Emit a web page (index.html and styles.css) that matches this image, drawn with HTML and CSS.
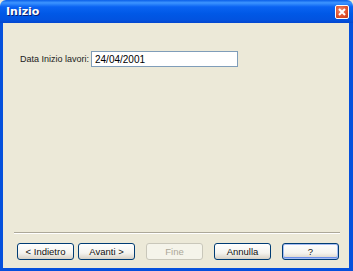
FILE: index.html
```html
<!DOCTYPE html>
<html lang="it">
<head>
    <meta charset="UTF-8">
    <title>Inizio</title>
    <link rel="stylesheet" href="styles.css">
</head>
<body>
    <div class="window">
        <div class="titlebar">
            <span class="title">Inizio</span>
            <button class="close-btn" aria-label="Chiudi">
                <svg width="8" height="8" viewBox="0 0 8 8"><path d="M1 1L7 7M7 1L1 7" stroke="#fff" stroke-width="2"/></svg>
            </button>
        </div>
        <div class="client">
            <div class="page">
                <div class="field-row">
                    <label for="data">Data Inizio lavori:</label>
                    <input type="text" id="data" class="text-input" value="24/04/2001">
                </div>
            </div>
            <div class="separator"></div>
            <div class="buttons">
                <button class="btn">&lt; Indietro</button>
                <button class="btn">Avanti &gt;</button>
                <button class="btn btn-gap" disabled>Fine</button>
                <button class="btn btn-gap">Annulla</button>
                <button class="btn btn-gap btn-default">?</button>
            </div>
        </div>
    </div>
</body>
</html>
```

FILE: styles.css
```css
html, body {
    margin: 0;
    padding: 0;
}
body {
    font-family: "Liberation Sans", Arial, sans-serif;
    font-size: 9.5px;
    color: #000;
    background: #ece9d8;
}
.window {
    width: 353px;
    height: 271px;
    display: flex;
    flex-direction: column;
    box-sizing: border-box;
}
.titlebar {
    height: 23px;
    flex: none;
    display: flex;
    align-items: center;
    justify-content: space-between;
    padding: 0 4px 0 6px;
    background: linear-gradient(#0a5fe8 0%, #3d95ff 12%, #0a63f2 30%, #0058e6 60%, #0253e0 85%, #0346cf 100%);
    border-radius: 6px 6px 0 0;
}
.title {
    color: #fff;
    font-family: "DejaVu Sans", Verdana, sans-serif;
    font-weight: bold;
    font-size: 11px;
    text-shadow: 1px 1px 0 #0a1e72;
}
.close-btn {
    width: 14px;
    height: 14px;
    padding: 0;
    border: 1px solid #fff;
    border-radius: 2px;
    background: radial-gradient(circle at 40% 35%, #f08a6a 0%, #e0532f 55%, #c23a16 100%);
    display: flex;
    align-items: center;
    justify-content: center;
}
.client {
    flex: 1;
    display: flex;
    flex-direction: column;
    border: 3px solid #0550dc;
    border-top: none;
    border-right-width: 4px;
    background: #ece9d8;
}
.page {
    flex: 1;
    padding: 28px 0 0 17px;
}
.field-row {
    display: flex;
    align-items: center;
    gap: 3px;
}
.field-row label {
    flex: none;
    width: 68px;
    white-space: nowrap;
    font-size: 9px;
    color: #222;
}
.text-input {
    width: 147px;
    height: 16px;
    box-sizing: border-box;
    border: 1px solid #7f9db9;
    padding: 0 3px;
    font: inherit;
    font-size: 10px;
    background: #fff;
}
.separator {
    margin: 9px 9px 0 11px;
    border-top: 1px solid #aca899;
    border-bottom: 1px solid #fff;
}
.buttons {
    display: flex;
    gap: 4px;
    padding: 9px 0 8px 14px;
}
.btn {
    width: 57px;
    height: 17px;
    padding: 0;
    font: inherit;
    color: #111;
    border: 1px solid #003c74;
    border-radius: 3px;
    background: linear-gradient(#fff 0%, #f5f4ef 60%, #d6d0c5 100%);
}
.btn-gap {
    margin-left: 7px;
}
.btn:disabled {
    color: #aca899;
    border-color: #c9c7ba;
    background: #f5f4ea;
}
.btn-default {
    box-shadow: inset 0 0 0 1px #a6bdf2, inset 0 -1px 0 1px #6d90e8;
}
```
